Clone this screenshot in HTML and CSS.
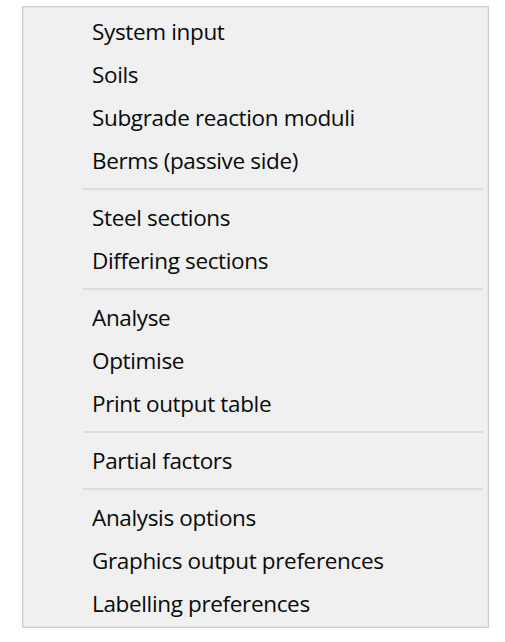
FILE: index.html
```html
<!DOCTYPE html>
<html>
<head>
<meta charset="utf-8">
<link rel="stylesheet" href="styles.css">
</head>
<body>
<div class="menu">
  <div class="item">System input</div>
  <div class="item">Soils</div>
  <div class="item">Subgrade reaction moduli</div>
  <div class="item">Berms (passive side)</div>
  <div class="sep"></div>
  <div class="item">Steel sections</div>
  <div class="item">Differing sections</div>
  <div class="sep"></div>
  <div class="item">Analyse</div>
  <div class="item">Optimise</div>
  <div class="item">Print output table</div>
  <div class="sep"></div>
  <div class="item">Partial factors</div>
  <div class="sep"></div>
  <div class="item">Analysis options</div>
  <div class="item">Graphics output preferences</div>
  <div class="item">Labelling preferences</div>
</div>
</body>
</html>
```

FILE: styles.css
```css
html, body {
  margin: 0;
  padding: 0;
  background: #ffffff;
}
body {
  font-family: "Open Sans", "Noto Sans", "Liberation Sans", sans-serif;
}
.menu {
  margin: 6px 0 0 22px;
  width: 463px;
  background: #f0f0f0;
  border: 1px solid #cccccc;
  box-shadow: inset 0 0 0 1px #e6e6e6;
  padding: 4px 1px 1px 1px;
  display: flex;
  flex-direction: column;
}
.item {
  height: 43px;
  line-height: 41px;
  padding-bottom: 2px;
  box-sizing: border-box;
  padding-left: 68px;
  font-size: 22.5px;
  font-weight: 500;
  letter-spacing: -0.35px;
  color: #0a0a0a;
  white-space: nowrap;
}
.sep {
  height: 2px;
  margin: 5px 4px 7px 59px;
  background: #dcdcdc;
}
```
